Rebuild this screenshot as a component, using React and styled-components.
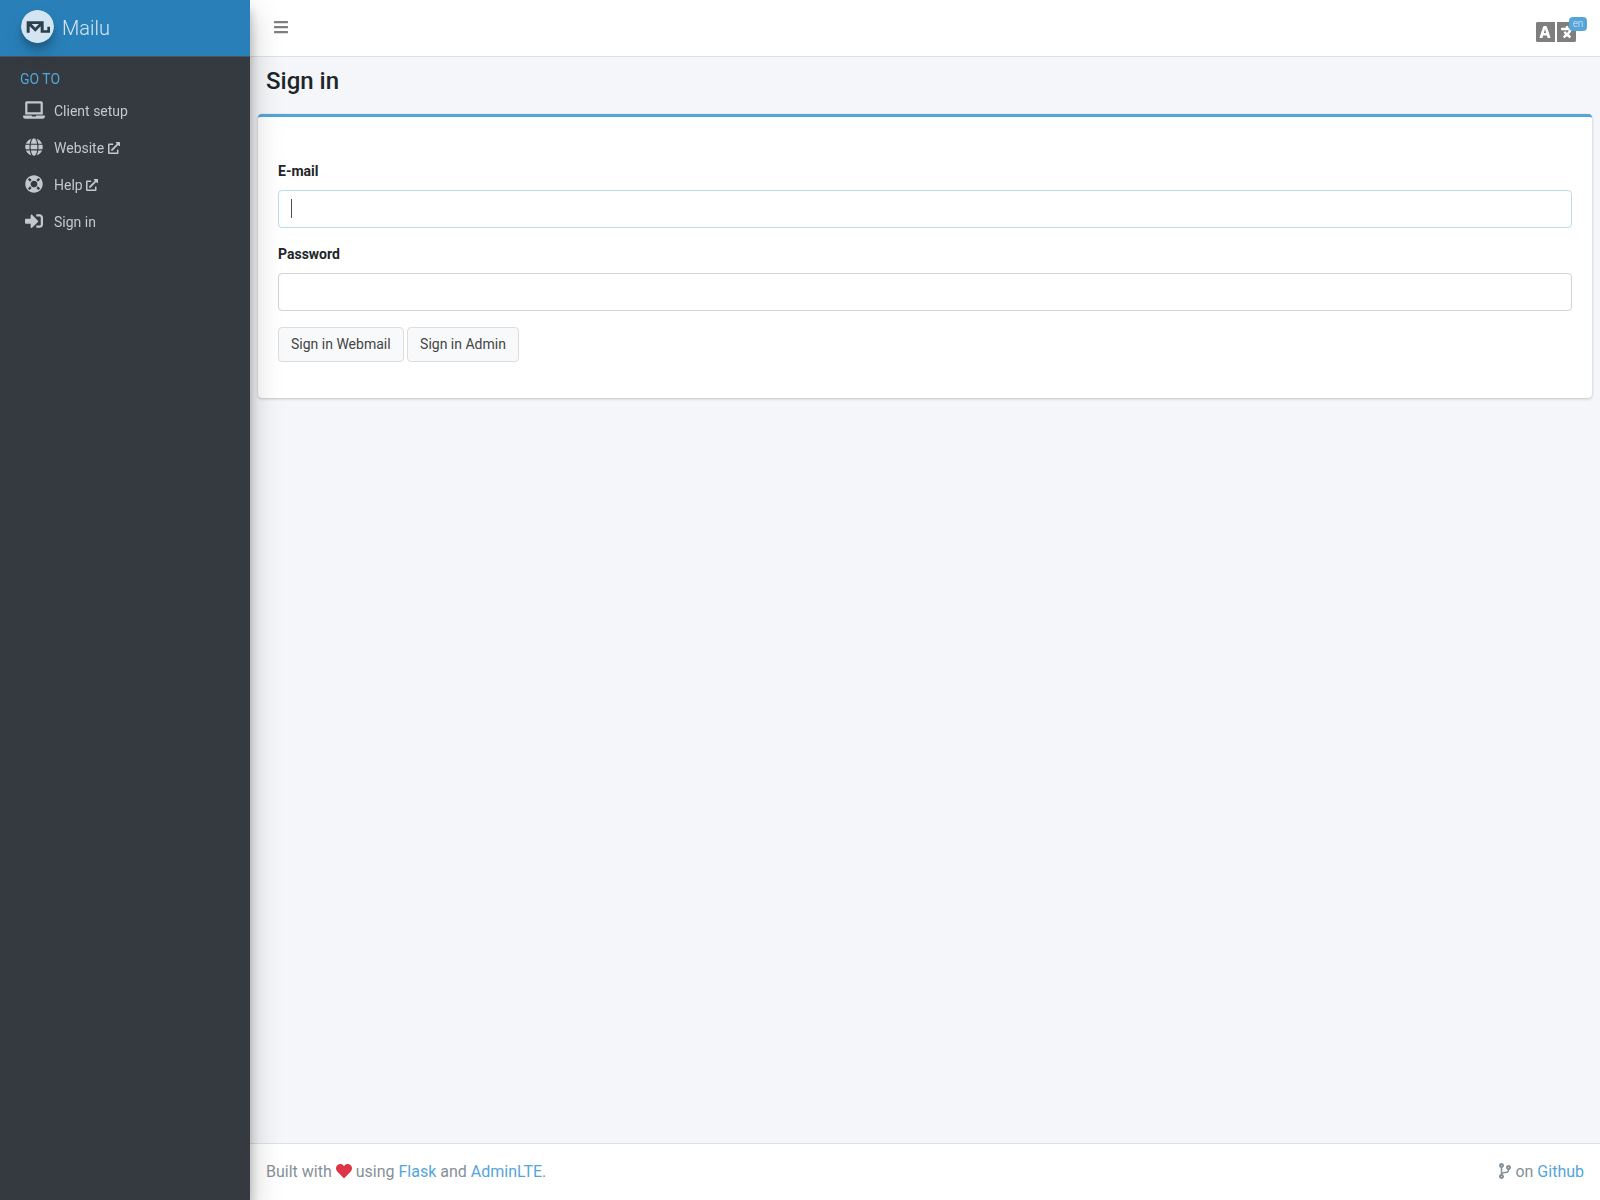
import React from "react";
import styled, { createGlobalStyle } from "styled-components";
import {
  FaBars,
  FaCodeBranch,
  FaExternalLinkAlt,
  FaGlobe,
  FaHeart,
  FaLanguage,
  FaLaptop,
  FaLifeRing,
  FaSignInAlt,
} from "react-icons/fa";

const links = [
  { label: "Client setup", icon: FaLaptop, wide: true },
  { label: "Website", icon: FaGlobe, external: true },
  { label: "Help", icon: FaLifeRing, external: true },
  { label: "Sign in", icon: FaSignInAlt },
];

const App = () => {
  return (
    <Wrapper>
      <GlobalStyle />
      <Sidebar>
        <Brand href="#">
          <Logo viewBox="0 0 99 99" aria-hidden="true">
            <circle cx="49.5" cy="49.5" r="49.5" fill="#fff" />
            <path
              fill="#2c2f33"
              fillRule="evenodd"
              d="M17 34H68V61H79V50H87V68H59V49L43 65L26 49V68H17ZM32 42L43 53L54 42Z"
            />
          </Logo>
          <span>Mailu</span>
        </Brand>
        <NavHeader>GO TO</NavHeader>
        <nav>
          <NavList>
            {links.map(({ label, icon: Icon, wide, external }) => (
              <li key={label}>
                <NavLink href="#">
                  <NavIcon $wide={wide}>
                    <Icon />
                  </NavIcon>
                  <NavText>
                    {label} {external && <FaExternalLinkAlt size={12} />}
                  </NavText>
                </NavLink>
              </li>
            ))}
          </NavList>
        </nav>
      </Sidebar>
      <Content>
        <Header>
          <MenuButton type="button" aria-label="Toggle menu">
            <FaBars size={16} />
          </MenuButton>
          <LanguageButton type="button" aria-label="Language">
            <FaLanguage size={40} />
            <Badge>en</Badge>
          </LanguageButton>
        </Header>
        <Main>
          <Title>Sign in</Title>
          <Card onSubmit={(e) => e.preventDefault()}>
            <Field>
              <label htmlFor="email">E-mail</label>
              <input id="email" type="text" placeholder=" " autoFocus />
            </Field>
            <Field>
              <label htmlFor="password">Password</label>
              <input id="password" type="password" placeholder=" " />
            </Field>
            <Button type="submit">Sign in Webmail</Button>{" "}
            <Button type="submit">Sign in Admin</Button>
          </Card>
        </Main>
        <Footer>
          <span>
            Built with <Heart /> using <a href="#">Flask</a> and{" "}
            <a href="#">AdminLTE</a>.
          </span>
          <span>
            <Branch /> on <a href="#">Github</a>
          </span>
        </Footer>
      </Content>
    </Wrapper>
  );
};

export default App;

const GlobalStyle = createGlobalStyle`
  * {
    box-sizing: border-box;
  }

  body {
    margin: 0;
    background: #f4f6f9;
    color: #212529;
    font-family: Roboto, sans-serif;
    font-size: 14px;
    line-height: 21px;
  }

  a {
    color: #55a5d9;
    text-decoration: none;
  }
`;

const Wrapper = styled.div`
  display: flex;
  min-height: 100vh;
`;

const Sidebar = styled.aside`
  position: relative;
  z-index: 1;
  flex: 0 0 250px;
  background: #343a40;
  box-shadow: 0 14px 28px rgba(0, 0, 0, 0.25), 0 10px 10px rgba(0, 0, 0, 0.22);
`;

const Brand = styled.a`
  display: flex;
  gap: 8px;
  height: 57px;
  padding: 10px 21px;
  background: #2980b9;
  border-bottom: 1px solid #4b545c;
  color: rgba(255, 255, 255, 0.8);
  font-size: 20px;
  font-weight: 300;
  line-height: 36px;
`;

const Logo = styled.svg`
  width: 33px;
  height: 33px;
  border-radius: 50%;
  opacity: 0.8;
  box-shadow: 0 10px 20px rgba(0, 0, 0, 0.19), 0 6px 6px rgba(0, 0, 0, 0.23);
`;

const NavHeader = styled.div`
  padding: 12px 20px 3px;
  color: #55a5d9;
`;

const NavList = styled.ul`
  margin: 0;
  padding: 0;
  list-style: none;
`;

const NavLink = styled.a`
  display: flex;
  gap: 8px;
  padding: 8px 22px;
  color: #c2c7d0;
`;

const NavText = styled.span`
  svg {
    vertical-align: -1px;
  }
`;

const NavIcon = styled.span`
  display: flex;
  flex: 0 0 24px;
  align-items: flex-start;
  justify-content: center;

  svg {
    flex-shrink: 0;
    width: ${(props) => (props.$wide ? "22px" : "18px")};
    height: 18px;
  }
`;

const Content = styled.div`
  display: flex;
  flex: 1;
  flex-direction: column;
  min-width: 0;
`;

const Header = styled.header`
  display: flex;
  justify-content: space-between;
  height: 57px;
  padding: 0 24px 0 23px;
  background: #fff;
  border-bottom: 1px solid #dee2e6;
`;

const IconButton = styled.button`
  display: flex;
  align-items: center;
  padding: 0;
  background: none;
  border: 0;
  color: rgba(0, 0, 0, 0.5);
`;

const MenuButton = styled(IconButton)`
  padding-bottom: 2px;
`;

const LanguageButton = styled(IconButton)`
  position: relative;
  padding-top: 8px;
`;

const Badge = styled.span`
  position: absolute;
  top: 17px;
  right: -11px;
  width: 18px;
  padding: 2px 0;
  border-radius: 4px;
  background: #55a5d9;
  color: rgba(255, 255, 255, 0.8);
  font-family: Roboto, sans-serif;
  font-size: 10px;
  font-weight: 300;
  line-height: 10px;
  text-align: center;
`;

const Main = styled.main`
  flex: 1;
  padding: 0 8px;
`;

const Title = styled.h1`
  margin: 0;
  padding: 10px 8px 18px;
  font-size: 24px;
  font-weight: 500;
  line-height: 29px;
`;

const Card = styled.form`
  padding: 44px 20px 36px;
  background: #fff;
  border-top: 3px solid #55a5d9;
  border-radius: 4px;
  box-shadow: 0 0 1px rgba(0, 0, 0, 0.13), 0 1px 3px rgba(0, 0, 0, 0.2);
`;

const Field = styled.div`
  margin-bottom: 16px;

  label {
    display: block;
    margin-bottom: 8px;
    font-weight: 700;
  }

  input {
    display: block;
    width: 100%;
    height: 38px;
    padding: 6px 12px;
    background: #fff;
    border: 1px solid #ced4da;
    border-radius: 4px;
    outline: none;
    color: #495057;
    font-family: inherit;
    font-size: 16px;
  }

  input:focus {
    border-color: #b8dcf0;
  }

  /* steady caret while the focused box is empty */
  input:focus:placeholder-shown {
    background: linear-gradient(#495057, #495057) 12px 8px / 1px 19px no-repeat
      #fff;
    caret-color: transparent;
  }
`;

const Button = styled.button`
  height: 35px;
  padding: 6px 12px;
  background: #f8f9fa;
  border: 1px solid #ddd;
  border-radius: 4px;
  color: #444;
  font-family: inherit;
  font-size: 14px;
  line-height: 21px;
`;

const Footer = styled.footer`
  display: flex;
  justify-content: space-between;
  padding: 16px;
  background: #fff;
  border-top: 1px solid #dee2e6;
  color: #869099;
  font-size: 16px;
  line-height: 24px;
`;

const Heart = styled(FaHeart)`
  color: #dc3545;
  vertical-align: -2px;
`;

const Branch = styled(FaCodeBranch)`
  width: 12px;
  vertical-align: -2px;
`;
